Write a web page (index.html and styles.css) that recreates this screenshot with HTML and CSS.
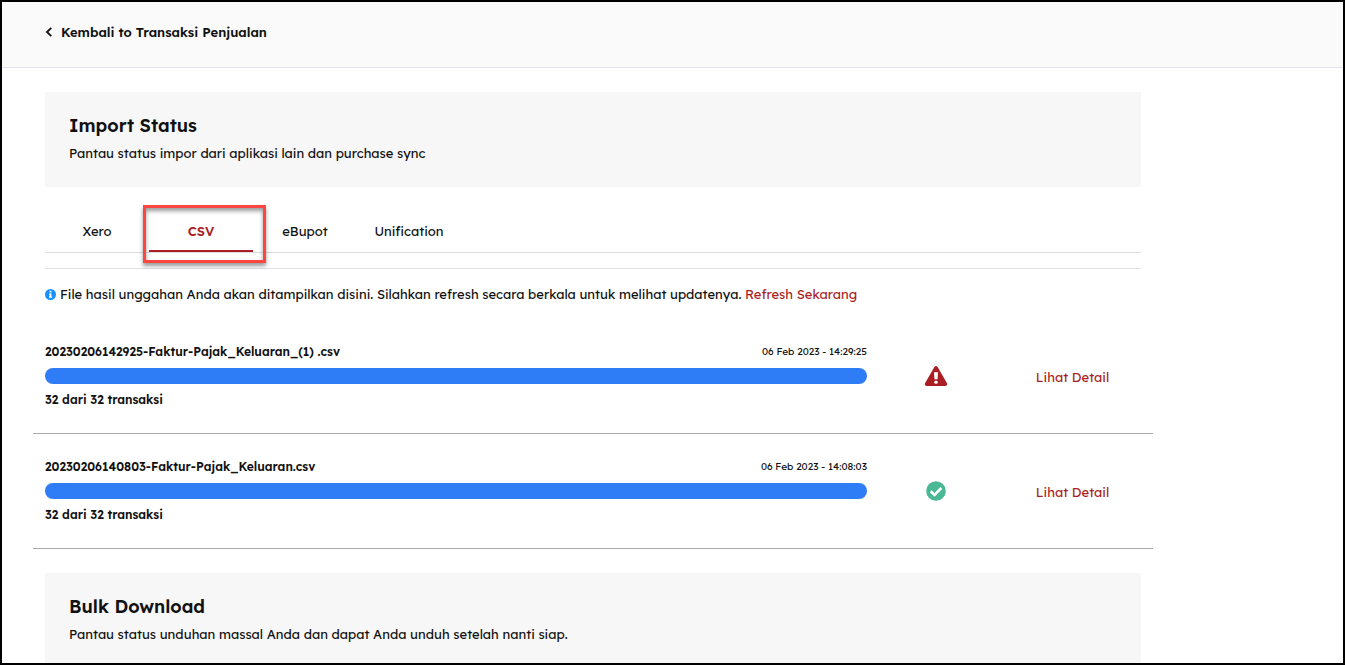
FILE: index.html
```html
<!DOCTYPE html>
<html lang="id">

<head>
    <meta charset="UTF-8">
    <meta name="viewport" content="width=device-width, initial-scale=1.0">
    <title>Import Status</title>
    <link rel="stylesheet" href="styles.css">
</head>

<body>
    <header class="topbar">
        <a class="back-link" href="#">
            <svg class="back-icon" viewBox="0 0 8 10" aria-hidden="true">
                <path d="M6.300.8 2 5l4.300 4.200" fill="none" stroke="currentColor" stroke-width="1.8" />
            </svg>
            Kembali to Transaksi Penjualan
        </a>
    </header>

    <main class="container">
        <section class="panel">
            <h1>Import Status</h1>
            <p>Pantau status impor dari aplikasi lain dan purchase sync</p>
        </section>

        <nav class="tabs">
            <button class="tab" type="button">Xero</button>
            <button class="tab active" type="button">CSV</button>
            <button class="tab" type="button">eBupot</button>
            <button class="tab" type="button">Unification</button>
        </nav>

        <p class="info">
            <svg class="info-icon" viewBox="0 0 12 12" aria-hidden="true">
                <circle cx="6" cy="6" r="6" fill="#1890ff" />
                <path d="M5 2h2v1.8H5zM4.5 5H7v3.2h.7v1.3H4.3V8.2H5V6.2h-.5z" fill="#fff" />
            </svg>
            <span>File hasil unggahan Anda akan ditampilkan disini. Silahkan refresh secara berkala untuk melihat updatenya. <a href="#">Refresh Sekarang</a></span>
        </p>

        <div class="import-item">
            <div class="progress">
                <div class="progress-head">
                    <span class="file-name">20230206142925-Faktur-Pajak_Keluaran_(1) .csv</span>
                    <time>06 Feb 2023 - 14:29:25</time>
                </div>
                <div class="bar"></div>
                <div class="count">32 dari 32 transaksi</div>
            </div>
            <svg class="status-icon" viewBox="0 0 576 512" role="img" aria-label="Gagal">
                <path d="M569.5 440c18.500 32-4.700 72-41.600 72H48.100c-36.900 0-60-40.100-41.600-72L246.400 24c18.500-32 64.700-32 83.200 0z" fill="#ab1f24" />
                <path d="M236 160h104l-13 180h-78z" fill="#fff" />
                <circle cx="288" cy="413" r="44" fill="#fff" />
            </svg>
            <a class="detail" href="#">Lihat Detail</a>
        </div>

        <div class="import-item">
            <div class="progress">
                <div class="progress-head">
                    <span class="file-name">20230206140803-Faktur-Pajak_Keluaran.csv</span>
                    <time>06 Feb 2023 - 14:08:03</time>
                </div>
                <div class="bar"></div>
                <div class="count">32 dari 32 transaksi</div>
            </div>
            <svg class="status-icon" viewBox="0 0 24 20" role="img" aria-label="Berhasil">
                <circle cx="12" cy="10" r="9.8" fill="#4ab795" />
                <path d="m6.700 10.300 3.800 3.700 6.800-7" fill="none" stroke="#fff" stroke-width="2.600" />
            </svg>
            <a class="detail" href="#">Lihat Detail</a>
        </div>

        <section class="panel">
            <h2>Bulk Download</h2>
            <p>Pantau status unduhan massal Anda dan dapat Anda unduh setelah nanti siap.</p>
        </section>
    </main>
</body>

</html>
```
FILE: styles.css
```css
* {
    box-sizing: border-box;
}

body {
    height: 100vh;
    margin: 0;
    overflow: hidden;
    border: 2px solid #000;
    background-color: #fff;
    color: #111;
    font-family: Lexend, Inter, sans-serif;
    font-size: 13px;
    line-height: 20px;
}

a {
    color: #ab1f24;
    text-decoration: none;
}

.topbar {
    padding: 20px 43px 25px;
    border-bottom: 1px solid #e1e3ea;
    background-color: #fafafa;
}

.back-link {
    display: inline-flex;
    align-items: center;
    gap: 8px;
    color: #111;
    font-weight: 600;
}

.back-icon {
    width: 8px;
    height: 10px;
}

.container {
    max-width: 1182px;
    padding: 24px 43px 0;
}

.panel {
    padding: 22px 24px 24px;
    background-color: #f7f7f7;
}

.panel h1,
.panel h2 {
    margin: 0 0 5px;
    font-size: 18px;
    font-weight: 600;
    line-height: 24px;
}

.panel p {
    margin: 0;
}

.tabs {
    display: flex;
    margin-top: 24px;
    border-bottom: 1px solid #dcdcdc;
}

.tab {
    position: relative;
    width: 104px;
    padding: 10px 0 9px;
    border: none;
    border-bottom: 2px solid transparent;
    background: none;
    color: #111;
    font: inherit;
    cursor: pointer;
}

.tab.active {
    border-bottom-color: #ab1f24;
    color: #ab1f24;
    font-weight: 600;
}

/* highlight frame over the selected tab */
.tab.active::after {
    content: "";
    position: absolute;
    top: -6px;
    right: -13px;
    bottom: -13px;
    left: -6px;
    border: 3px solid #fd4642;
    box-shadow: 0 3px 4px rgba(0, 0, 0, 0.4), inset 0 3px 4px rgba(0, 0, 0, 0.4);
}

.info {
    display: flex;
    align-items: center;
    gap: 4px;
    margin: 15px 0 0;
    padding: 15px 0 0;
    border-top: 1px solid #dfe3e8;
}

.info-icon {
    flex: none;
    width: 11px;
    height: 11px;
}

.import-item {
    display: grid;
    grid-template-columns: 6fr 1fr 1fr;
    align-items: center;
    margin: 0 -12px;
    padding: 23px 12px;
    border-bottom: 1px solid #a9a9a9;
}

.info + .import-item {
    margin-top: 15px;
}

.progress-head {
    display: flex;
    justify-content: space-between;
    align-items: center;
    margin-bottom: 6px;
}

.file-name,
.count {
    font-size: 12px;
    font-weight: 600;
}

.progress time {
    font-size: 10px;
}

.bar {
    height: 16px;
    border-radius: 8px;
    background-color: #2e7cf6;
}

.count {
    margin-top: 6px;
}

.status-icon {
    justify-self: center;
    width: 24px;
    height: 20px;
}

.detail {
    padding-top: 2px;
    text-align: center;
}

.import-item + .panel {
    margin-top: 24px;
}
```
